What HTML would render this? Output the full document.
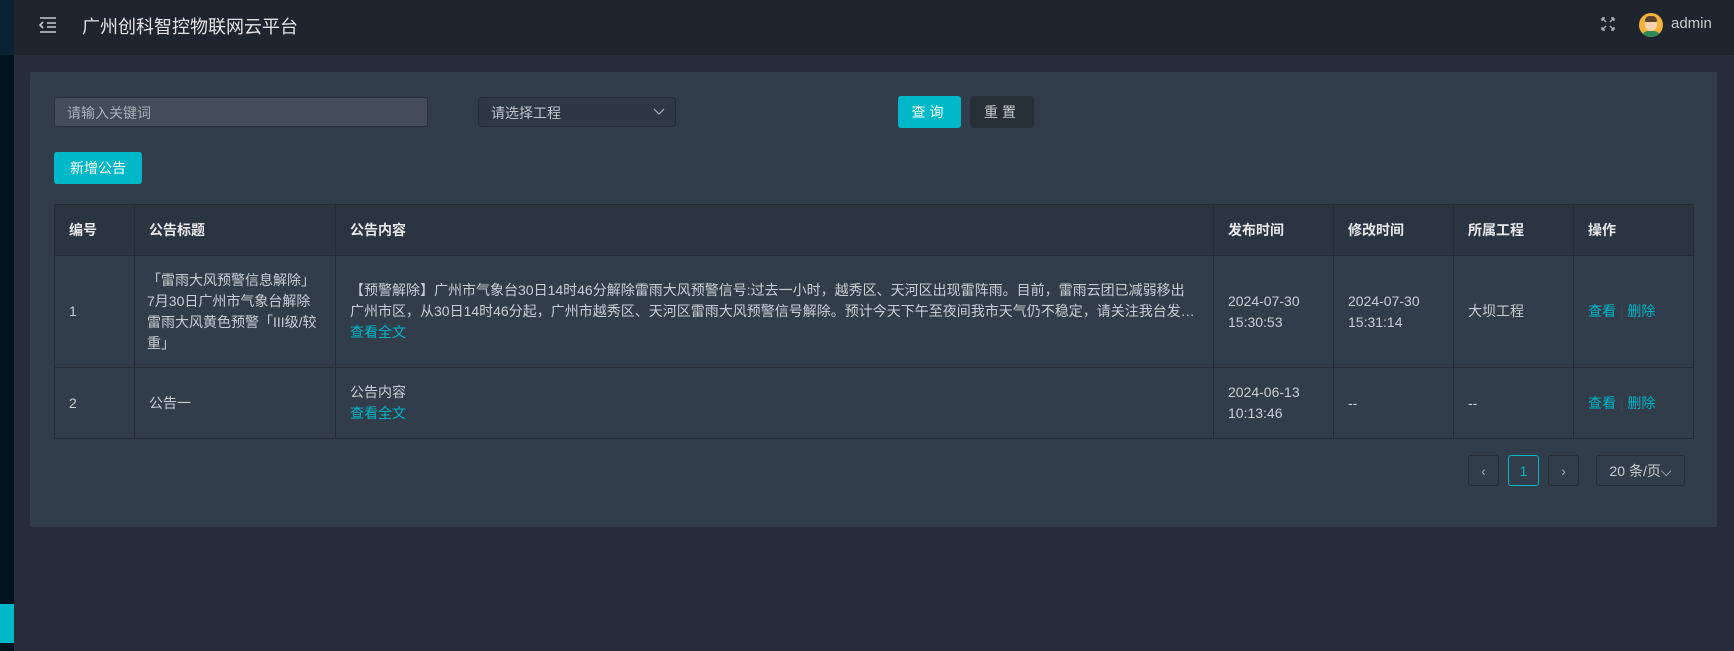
<!DOCTYPE html>
<html><head><meta charset="utf-8"><style>
*{box-sizing:border-box;margin:0;padding:0}
body{width:1734px;height:651px;background:#262d38;font-family:"Liberation Sans","Noto Sans CJK SC",sans-serif;font-size:14px;color:#c9ced4;position:relative;overflow:hidden}
.abs{position:absolute}
.side{left:0;top:0;width:14px;height:651px;background:#00141f}
.header{left:14px;top:0;width:1720px;height:55px;background:#1f252e}
.card{left:30px;top:72px;width:1687px;height:455px;background:#323d4b;border-radius:2px}
.btn{display:flex;align-items:center;justify-content:center;border-radius:3px;font-size:14px}
table{border-collapse:collapse;position:absolute;left:54px;top:204px;width:1639px;table-layout:fixed}
td,th{border:1px solid #252c36;padding:0 14px;text-align:left;vertical-align:middle;line-height:21px}
th{background:#2b3441;color:#e6e8ea;font-weight:bold;height:51px}
td{background:#323d4b}
a{color:#00b6c8;text-decoration:none}
.pg{border:1px solid #252c36;border-radius:3px;display:flex;align-items:center;justify-content:center;color:#aab}
.ln{display:block;white-space:nowrap;overflow:hidden}
</style></head><body>
<div class="abs side"><div class="abs" style="left:0;top:0;width:14px;height:55px;background:#0b2235"></div><div class="abs" style="left:0;top:604px;width:14px;height:39px;background:#00b8c8"></div></div>
<div class="abs header">
 <svg class="abs" style="left:24px;top:16px" width="20" height="18" viewBox="0 0 20 18" fill="none" stroke="#c8ccd0" stroke-width="1.6"><path d="M2 2h16M9 7h9M9 11h9M2 16h16M5 6l-3 3 3 3"/></svg>
 <div class="abs" style="left:68px;top:13px;font-size:18px;color:#e2e4e6">广州创科智控物联网云平台</div>
 <svg class="abs" style="left:1587px;top:17px" width="14" height="14" viewBox="0 0 14 14" fill="none" stroke="#aab0b6" stroke-width="1.4"><path d="M1 1l4 4M1 1v3M1 1h3M13 1l-4 4M13 1v3M13 1h-3M1 13l4-4M1 13v-3M1 13h3M13 13l-4-4M13 13v-3M13 13h-3"/></svg>
 <div class="abs" style="left:1625px;top:13px;width:24px;height:24px;border-radius:50%;background:#f2b33d;overflow:hidden">
  <div class="abs" style="left:6px;top:5px;width:12px;height:13px;border-radius:50%;background:#f6d3b0"></div>
  <div class="abs" style="left:6px;top:3px;width:12px;height:6px;border-radius:6px 6px 2px 2px;background:#5a4030"></div>
  <div class="abs" style="left:3px;top:18px;width:18px;height:8px;border-radius:6px 6px 0 0;background:#2e8b57"></div>
 </div>
 <div class="abs" style="left:1657px;top:15px;font-size:15px;color:#c8ccd0">admin</div>
</div>
<div class="abs card"></div>
<div class="abs" style="left:54px;top:97px;width:374px;height:30px;background:#434c58;border:1px solid #2a313b;border-radius:3px;padding:5px 12px;color:#aab0b8">请输入关键词</div>
<div class="abs" style="left:478px;top:97px;width:198px;height:30px;background:#2e3845;border:1px solid #252c36;border-radius:3px;padding:5px 12px;color:#c0c5cb">请选择工程
 <svg class="abs" style="right:10px;top:10px" width="12" height="8" viewBox="0 0 12 8" fill="none" stroke="#aab0b6" stroke-width="1.2"><path d="M1 1l5 5 5-5"/></svg></div>
<div class="abs btn" style="left:898px;top:96px;width:63px;height:32px;background:#00b8c8;color:#fff;letter-spacing:4px">查询</div>
<div class="abs btn" style="left:970px;top:96px;width:64px;height:32px;background:#262e38;color:#c8ccd0;letter-spacing:4px">重置</div>
<div class="abs btn" style="left:54px;top:152px;width:88px;height:32px;background:#00b8c8;color:#fff">新增公告</div>
<table>
<colgroup><col style="width:80px"><col style="width:201px"><col style="width:878px"><col style="width:120px"><col style="width:120px"><col style="width:120px"><col style="width:120px"></colgroup>
<tr><th>编号</th><th>公告标题</th><th>公告内容</th><th>发布时间</th><th>修改时间</th><th>所属工程</th><th>操作</th></tr>
<tr style="height:112px"><td>1</td><td style="padding-left:12px">「雷雨大风预警信息解除」7月30日广州市气象台解除雷雨大风黄色预警「III级/较重」</td><td><span class="ln">【预警解除】广州市气象台30日14时46分解除雷雨大风预警信号:过去一小时，越秀区、天河区出现雷阵雨。目前，雷雨云团已减弱移出</span><span class="ln">广州市区，从30日14时46分起，广州市越秀区、天河区雷雨大风预警信号解除。预计今天下午至夜间我市天气仍不稳定，请关注我台发…</span><a>查看全文</a></td><td>2024-07-30 15:30:53</td><td>2024-07-30 15:31:14</td><td>大坝工程</td><td><a>查看</a> <span style="color:#3a4654">|</span> <a>删除</a></td></tr>
<tr style="height:71px"><td>2</td><td>公告一</td><td>公告内容<br><a>查看全文</a></td><td>2024-06-13 10:13:46</td><td>--</td><td>--</td><td><a>查看</a> <span style="color:#3a4654">|</span> <a>删除</a></td></tr>
</table>
<div class="abs pg" style="left:1468px;top:455px;width:31px;height:31px">‹</div>
<div class="abs pg" style="left:1508px;top:455px;width:31px;height:31px;border-color:#00b8c8;color:#00b8c8">1</div>
<div class="abs pg" style="left:1548px;top:455px;width:31px;height:31px">›</div>
<div class="abs pg" style="left:1596px;top:455px;width:89px;height:31px;color:#c8ccd0">20 条/页⌵</div>
</body></html>
